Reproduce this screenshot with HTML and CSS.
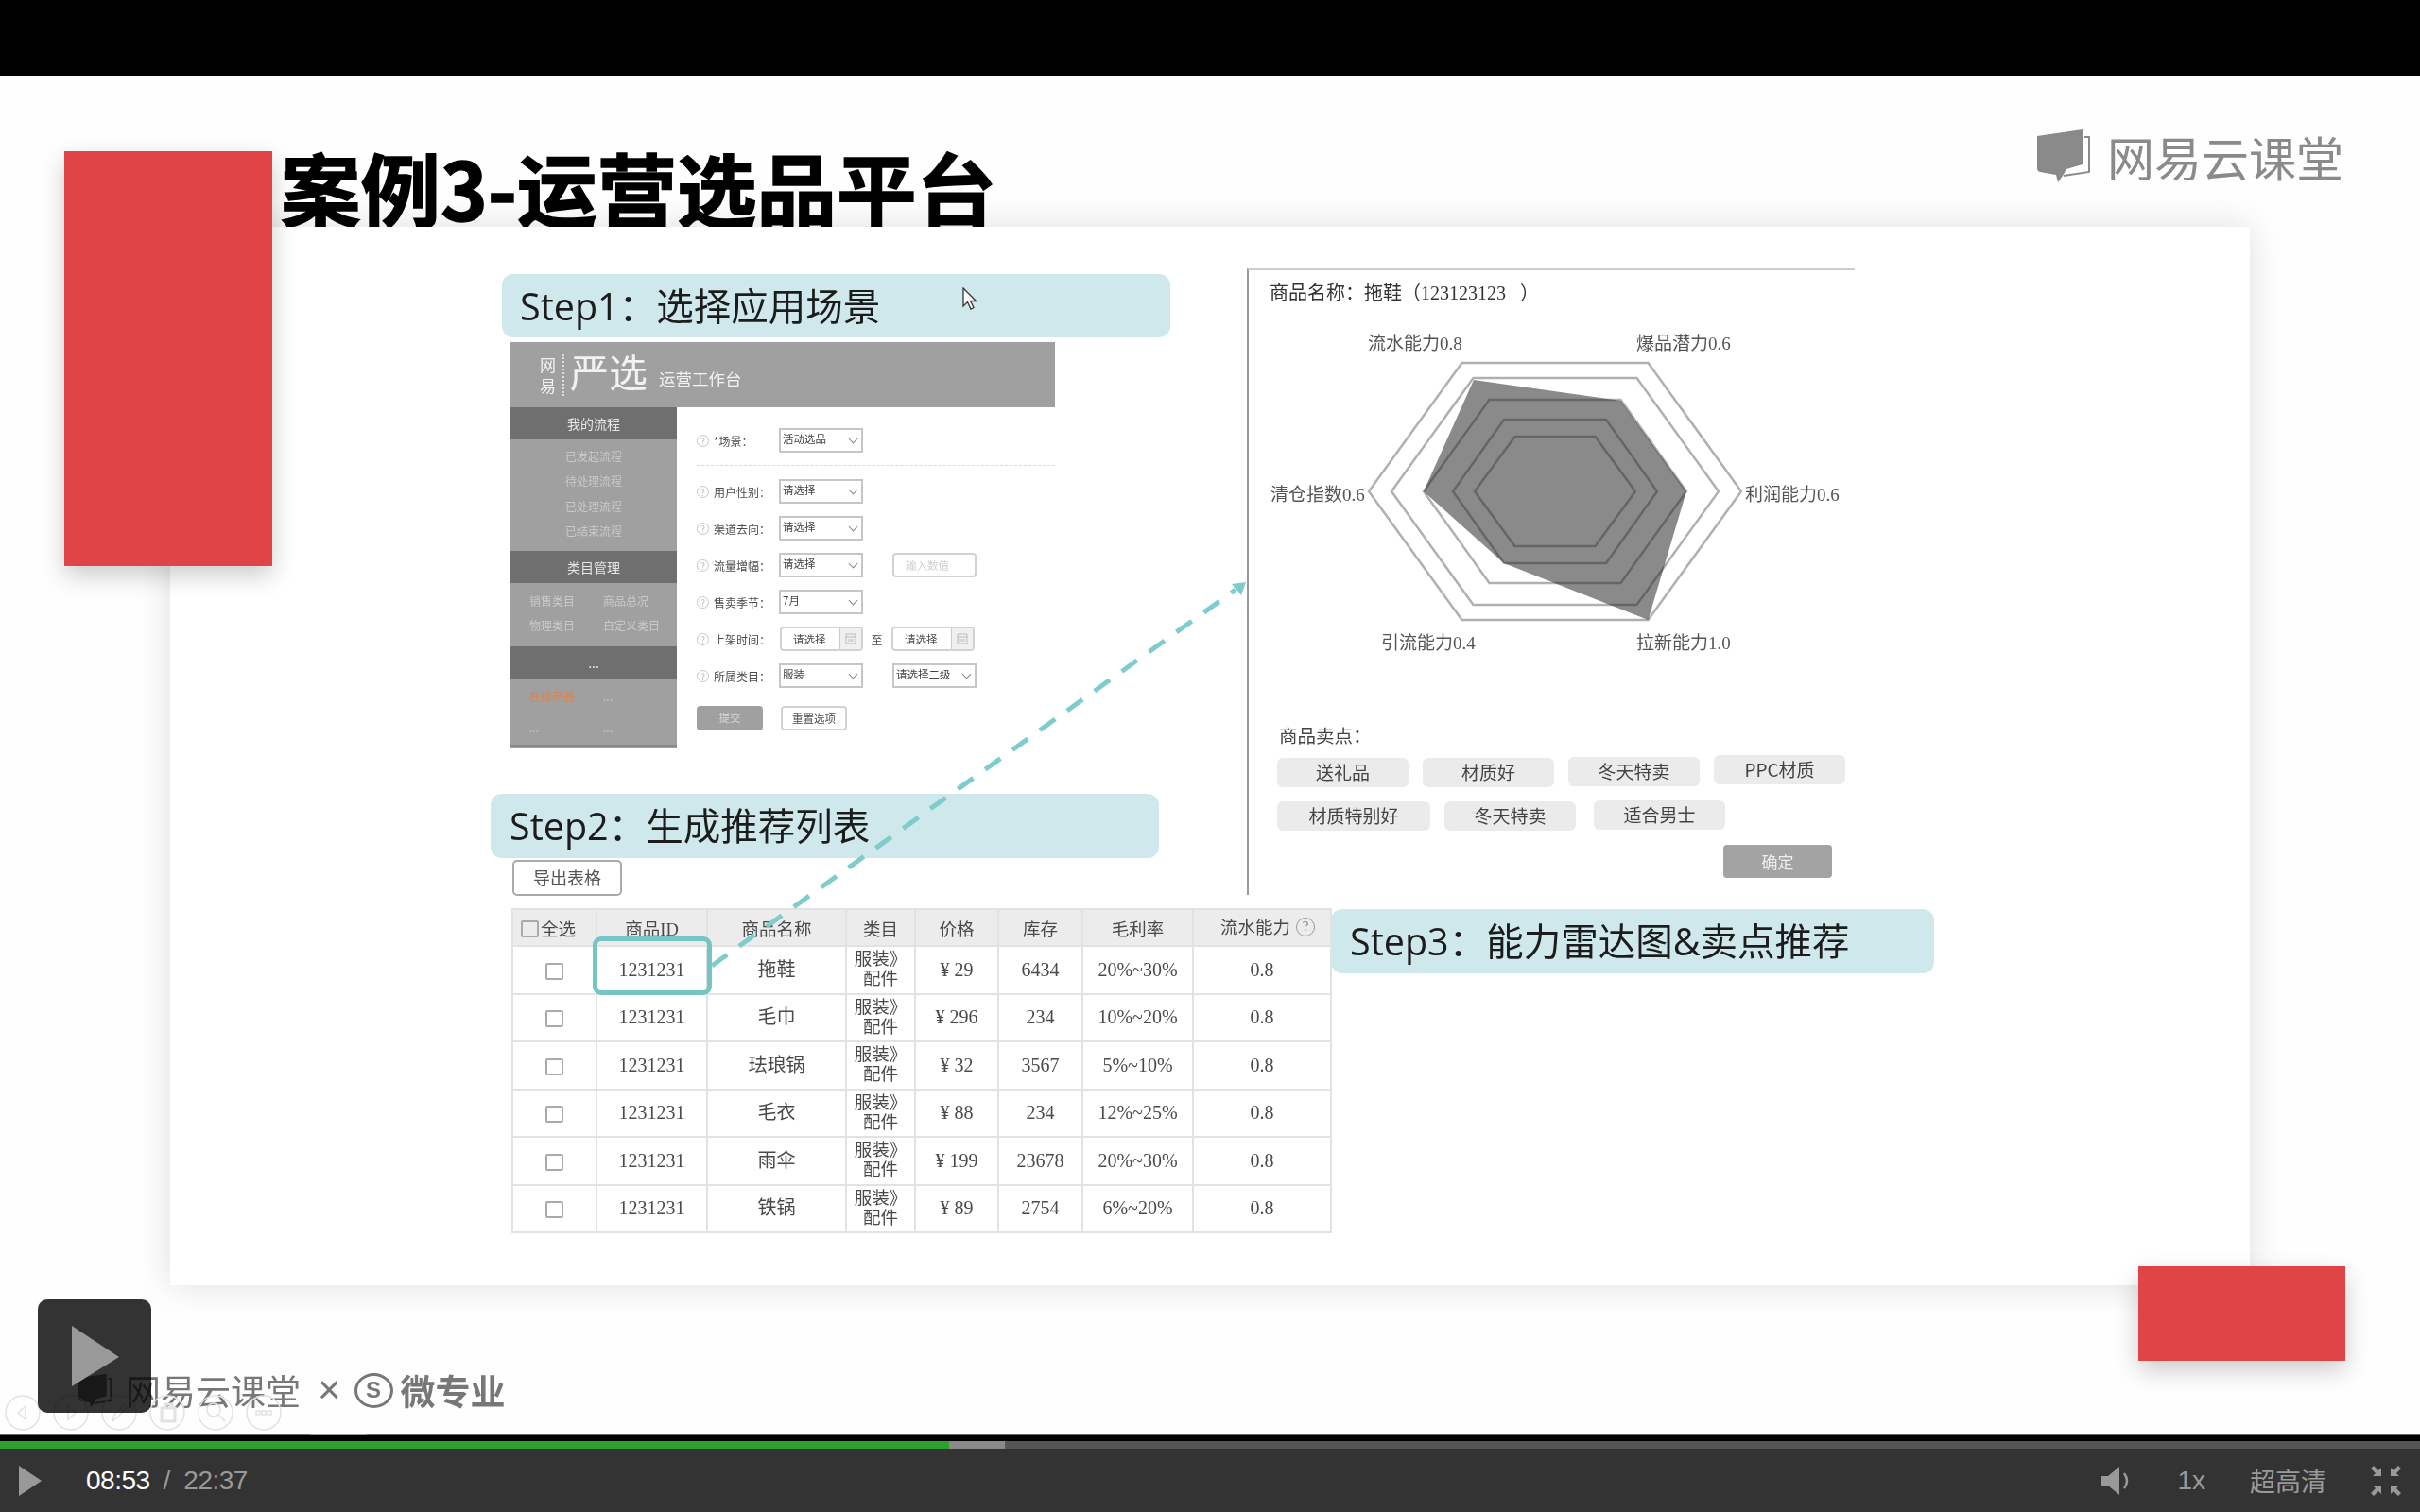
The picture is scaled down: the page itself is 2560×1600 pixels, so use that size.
FILE: index.html
```html
<!DOCTYPE html>
<html lang="zh-CN">
<head>
    <meta charset="UTF-8">
    <title>案例3-运营选品平台</title>
    <link rel="stylesheet" href="styles.css">
</head>
<body>
<div class="player">
    <div class="topbar"></div>

    <!-- Slide: free canvas -->
    <div class="slide">
        <div class="red red-left"></div>
        <h1 class="slide-title">案例3-运营选品平台</h1>
        <div class="logo-top">
            <svg class="book-top" viewBox="0 0 56 58"><path d="M0 8L48 1V38L31 43L27 50L22 57L20 49L3 46Q0 45 0 42Z" fill="#8a8a8a"/><path d="M50 9H55V46L28 50" fill="none" stroke="#8a8a8a" stroke-width="2"/></svg>
            <span>网易云课堂</span>
        </div>

        <div class="card">
            <div class="col-left">
                <div class="step step1">Step1：选择应用场景</div>

                <!-- Mock of the admin page -->
                <div class="mock">
                    <div class="mock-head">
                        <div class="mock-wy">网<br>易</div>
                        <div class="mock-yx">严选</div>
                        <div class="mock-sub">运营工作台</div>
                    </div>
                    <div class="mock-body">
                        <div class="mock-side">
                            <div class="side-title">我的流程</div>
                            <div class="side-list">
                                <div>已发起流程</div>
                                <div>待处理流程</div>
                                <div>已处理流程</div>
                                <div>已结束流程</div>
                            </div>
                            <div class="side-title">类目管理</div>
                            <div class="side-grid">
                                <div>销售类目</div><div>商品总况</div>
                                <div>物理类目</div><div>自定义类目</div>
                            </div>
                            <div class="side-title">...</div>
                            <div class="side-grid side-grid-last">
                                <div class="side-on">在线商品</div><div>...</div>
                                <div>...</div><div>...</div>
                            </div>
                        </div>
                        <div class="mock-form">
                            <div class="row"><i class="q">?</i><label>*场景：</label><div class="sel">活动选品</div></div>
                            <div class="dash dash-first"></div>
                            <div class="rows">
                                <div class="row"><i class="q">?</i><label>用户性别：</label><div class="sel">请选择</div></div>
                                <div class="row"><i class="q">?</i><label>渠道去向：</label><div class="sel">请选择</div></div>
                                <div class="row"><i class="q">?</i><label>流量增幅：</label><div class="sel">请选择</div><div class="inp inp-hint">输入数值</div></div>
                                <div class="row"><i class="q">?</i><label>售卖季节：</label><div class="sel">7月</div></div>
                                <div class="row"><i class="q">?</i><label>上架时间：</label><div class="date">请选择<b><svg viewBox="0 0 12 12"><path d="M1 1H11V11H1ZM1 4H11M4 6V9M6 6V9M8 6V9"/></svg></b></div><span class="to">至</span><div class="date date-to">请选择<b><svg viewBox="0 0 12 12"><path d="M1 1H11V11H1ZM1 4H11M4 6V9M6 6V9M8 6V9"/></svg></b></div></div>
                                <div class="row"><i class="q">?</i><label>所属类目：</label><div class="sel">服装</div><div class="sel sel-second">请选择二级</div></div>
                            </div>
                            <div class="btns">
                                <div class="btn-sub">提交</div>
                                <div class="btn-reset">重置选项</div>
                            </div>
                            <div class="dash dash-last"></div>
                        </div>
                    </div>
                </div>

                <div class="step step2">Step2：生成推荐列表</div>
                <div class="export">导出表格</div>

                <table class="goods">
                    <colgroup>
                        <col class="c1"><col class="c2"><col class="c3"><col class="c4"><col class="c5"><col class="c6"><col class="c7"><col class="c8">
                    </colgroup>
                    <thead>
                        <tr>
                            <th class="all"><span class="check"></span>全选</th>
                            <th>商品ID</th><th>商品名称</th><th>类目</th><th>价格</th><th>库存</th><th>毛利率</th>
                            <th class="th-flow">流水能力<i class="q q-head">?</i></th>
                        </tr>
                    </thead>
                    <tbody>
                        <tr><td><span class="check"></span></td><td>1231231</td><td>拖鞋</td><td class="cat">服装》<br>配件</td><td>¥ 29</td><td>6434</td><td>20%~30%</td><td>0.8</td></tr>
                        <tr><td><span class="check"></span></td><td>1231231</td><td>毛巾</td><td class="cat">服装》<br>配件</td><td>¥ 296</td><td>234</td><td>10%~20%</td><td>0.8</td></tr>
                        <tr><td><span class="check"></span></td><td>1231231</td><td>珐琅锅</td><td class="cat">服装》<br>配件</td><td>¥ 32</td><td>3567</td><td>5%~10%</td><td>0.8</td></tr>
                        <tr><td><span class="check"></span></td><td>1231231</td><td>毛衣</td><td class="cat">服装》<br>配件</td><td>¥ 88</td><td>234</td><td>12%~25%</td><td>0.8</td></tr>
                        <tr><td><span class="check"></span></td><td>1231231</td><td>雨伞</td><td class="cat">服装》<br>配件</td><td>¥ 199</td><td>23678</td><td>20%~30%</td><td>0.8</td></tr>
                        <tr><td><span class="check"></span></td><td>1231231</td><td>铁锅</td><td class="cat">服装》<br>配件</td><td>¥ 89</td><td>2754</td><td>6%~20%</td><td>0.8</td></tr>
                    </tbody>
                </table>
            </div>

            <div class="col-right">
                <div class="panel">
                    <div class="panel-title">商品名称：拖鞋（<span class="num">123123123&nbsp;&nbsp;&nbsp;</span>）</div>
                    <svg class="radar" viewBox="1320 322 642 400">
                        <g fill="none" stroke="#b0b0b0" stroke-width="2.5">
                            <polygon points="1447,521 1545.5,385 1742.5,385 1841,521 1742.5,657 1545.5,657"/>
                            <polygon points="1471,521 1557.5,401 1730.5,401 1817,521 1730.5,641 1557.5,641"/>
                            <polygon points="1505,521 1574.5,424 1713.5,424 1783,521 1713.5,618 1574.5,618"/>
                            <polygon points="1536,521 1590,445 1698,445 1752,521 1698,597 1590,597"/>
                            <polygon points="1559,521 1601.5,463 1686.5,463 1729,521 1686.5,579 1601.5,579"/>
                        </g>
                        <polygon class="radar-data" points="1558,403 1713.5,425 1783,521 1742.5,657 1590,597 1505,521"/>
                        <g class="radar-text">
                            <text x="1446" y="369">流水能力<tspan>0.8</tspan></text>
                            <text x="1730" y="369">爆品潜力<tspan>0.6</tspan></text>
                            <text x="1845" y="529">利润能力<tspan>0.6</tspan></text>
                            <text x="1343" y="529">清仓指数<tspan>0.6</tspan></text>
                            <text x="1460" y="686">引流能力<tspan>0.4</tspan></text>
                            <text x="1730" y="686">拉新能力<tspan>1.0</tspan></text>
                        </g>
                    </svg>
                    <div class="sell-title">商品卖点：</div>
                    <div class="chips">
                        <span class="chip">送礼品</span>
                        <span class="chip">材质好</span>
                        <span class="chip chip-up">冬天特卖</span>
                        <span class="chip chip-up2">PPC材质</span>
                    </div>
                    <div class="chips chips-two">
                        <span class="chip chip-wide">材质特别好</span>
                        <span class="chip">冬天特卖</span>
                        <span class="chip chip-far">适合男士</span>
                    </div>
                    <div class="confirm">确定</div>
                </div>
                <div class="step step3">Step3：能力雷达图&amp;卖点推荐</div>
            </div>

            <!-- Arrow from the selected row to the radar panel -->
            <svg class="arrow" viewBox="0 0 2200 1120">
                <line x1="573" y1="782" x2="1127" y2="384" stroke="#7fcccc" stroke-width="5" stroke-dasharray="20 15.6"/>
                <polygon points="1138,376 1123,378 1133,390" fill="#7fcccc"/>
            </svg>
            <div class="picked"></div>
            <svg class="cursor" viewBox="0 0 16 24"><path d="M1 1V20L5.500 15.500L9 23L12 21.500L8.500 14.500H14.500Z" fill="#fff" stroke="#333" stroke-width="1.300"/></svg>
        </div>

        <div class="red red-right"></div>

        <div class="logo-bottom">
            <svg class="book-bottom" viewBox="0 0 56 58"><path d="M0 8L48 1V38L31 43L27 50L22 57L20 49L3 46Q0 45 0 42Z" fill="#777"/><path d="M50 9H55V46L28 50" fill="none" stroke="#777" stroke-width="2.500"/></svg>
            <span class="lb-name">网易云课堂</span>
            <span class="lb-x">×</span>
            <span class="lb-s">S</span>
            <span class="lb-wzy">微专业</span>
        </div>

        <div class="ghost-tools">
            <svg viewBox="0 0 38 38"><circle cx="19" cy="19" r="18"/><path d="M22 12L14 19L22 26Z"/></svg>
            <svg viewBox="0 0 38 38"><circle cx="19" cy="19" r="18"/><path d="M16 12L24 19L16 26Z"/></svg>
            <svg viewBox="0 0 38 38"><circle cx="19" cy="19" r="18"/><path d="M12 28L14 21L25 10L28 13L17 24Z"/></svg>
            <svg viewBox="0 0 38 38"><circle cx="19" cy="19" r="18"/><path d="M13 14H27V28H13ZM17 10H24V14H17Z" stroke-width="3"/></svg>
            <svg viewBox="0 0 38 38"><circle cx="19" cy="19" r="18"/><circle cx="17" cy="16" r="7"/><path d="M22 21L29 28"/></svg>
            <svg viewBox="0 0 38 38"><circle cx="19" cy="19" r="18"/><path d="M11 17h4v4h-4zM17 17h4v4h-4zM23 17h4v4h-4z"/></svg>
        </div>

        <div class="big-play"><svg viewBox="0 0 50 64"><path d="M0 0L50 33L0 64Z" fill="#999"/></svg></div>
    </div>

    <!-- Seek bar -->
    <div class="seek-line"><span></span></div>
    <div class="seek-gap"></div>
    <div class="seek-track">
        <div class="seek-done"></div>
        <div class="seek-buffer"></div>
    </div>

    <!-- Controls -->
    <div class="controls">
        <svg class="ctl-play" viewBox="0 0 24 32"><path d="M0 0L24 16L0 32Z" fill="#999"/></svg>
        <span class="time-now">08:53</span>
        <span class="time-sep">/</span>
        <span class="time-all">22:37</span>
        <svg class="ctl-vol" viewBox="0 0 32 32"><path d="M0 11H7L19 1V31L7 21H0Z" fill="#999"/><path d="M24 8Q30 16 24 24" fill="none" stroke="#999" stroke-width="2.500"/></svg>
        <span class="ctl-speed">1x</span>
        <span class="ctl-hd">超高清</span>
        <svg class="ctl-full" viewBox="0 0 32 32"><path d="M0 3L3 0L8 5L11 2V11H2L5 8ZM32 3L29 0L24 5L21 2V11H30L27 8ZM0 29L3 32L8 27L11 30V21H2L5 24ZM32 29L29 32L24 27L21 30V21H30L27 24Z" fill="#999"/></svg>
    </div>
</div>
</body>
</html>
```

FILE: styles.css
```css
/* Reset */
body, h1 {
    margin: 0;
    padding: 0;
}

body {
    font-family: "Noto Sans CJK SC", sans-serif;
    background-color: #000;
}

.player {
    width: 2560px;
    height: 1600px;
    display: flex;
    flex-direction: column;
    overflow: hidden;
}

.topbar {
    height: 80px;
    background-color: #000;
}

/* Slide */
.slide {
    position: relative;
    height: 1437px;
    background-color: #fefefe;
    overflow: hidden;
}

.red {
    position: absolute;
    background-color: #e04447;
    box-shadow: 0 10px 24px rgba(0, 0, 0, 0.2);
    z-index: 3;
}

.red-left {
    left: 68px;
    top: 80px;
    width: 220px;
    height: 439px;
}

.red-right {
    left: 2262px;
    top: 1260px;
    width: 219px;
    height: 100px;
}

.slide-title {
    position: absolute;
    left: 297px;
    top: 62px;
    font-size: 84.500px;
    line-height: 110px;
    font-weight: 700;
    color: #000;
    white-space: nowrap;
    -webkit-text-stroke: 1.500px #000;
    filter: blur(0.5px);
}

.logo-top {
    position: absolute;
    left: 2155px;
    top: 56px;
    display: flex;
    align-items: center;
    gap: 18px;
    color: #8a8a8a;
    font-size: 50px;
    line-height: 57px;
    filter: blur(0.4px);
}

.book-top {
    width: 56px;
    height: 58px;
}

/* Card */
.card {
    position: absolute;
    left: 180px;
    top: 160px;
    width: 2200px;
    height: 1120px;
    padding-left: 339px;
    box-sizing: border-box;
    display: flex;
    background-color: #fff;
    box-shadow: 0 0 34px rgba(0, 0, 0, 0.13);
    z-index: 1;
}

.col-left {
    width: 889px;
    flex: none;
    display: flex;
    flex-direction: column;
    align-items: flex-start;
}

.col-right {
    margin-left: -89px;
    display: flex;
    flex-direction: column;
    align-items: flex-start;
}

.step {
    box-sizing: border-box;
    background-color: #cfe8ec;
    border-radius: 12px;
    color: #1c1c1c;
    font-family: "Open Sans", "Noto Sans CJK SC", sans-serif;
    font-size: 39.500px;
    white-space: nowrap;
    display: flex;
    align-items: center;
    padding-bottom: 4px;
    filter: blur(0.4px);
}

.step1 {
    margin: 50px 0 0 12px;
    width: 707px;
    height: 67px;
    padding-left: 19px;
}

.step2 {
    margin-top: 48px;
    width: 707px;
    height: 68px;
    padding-left: 20px;
}

.step3 {
    margin: 15px 0 0 89px;
    width: 638px;
    height: 68px;
    padding-left: 20px;
}

/* Mock page */
.mock {
    margin: 5px 0 0 21px;
    width: 576px;
    height: 430px;
    filter: blur(0.5px);
    overflow: hidden;
}

.mock-head {
    height: 69px;
    background-color: #a0a0a0;
    display: flex;
    align-items: center;
    color: #f2f2f2;
    padding-left: 31px;
}

.mock-wy {
    font-size: 17px;
    line-height: 22px;
    width: 24px;
    border-right: 2px dotted #ddd;
    margin-right: 6px;
}

.mock-yx {
    font-size: 41px;
    line-height: 50px;
    width: 94px;
    margin-top: -9px;
}

.mock-sub {
    font-size: 17.500px;
    margin-top: 8px;
}

.mock-body {
    display: flex;
    height: 361px;
}

.mock-side {
    width: 176px;
    flex: none;
    background-color: #a0a0a0;
    color: #c9c9c9;
    font-size: 12px;
}

.side-title {
    height: 34px;
    line-height: 34px;
    text-align: center;
    background-color: #6f6f6f;
    color: #e6e6e6;
    font-size: 14px;
}

.side-list {
    height: 118px;
    box-sizing: border-box;
    padding-top: 5px;
    text-align: center;
    line-height: 26.300px;
}

.side-grid {
    height: 67px;
    box-sizing: border-box;
    padding: 6px 0 0 20px;
    display: grid;
    grid-template-columns: 78px 1fr;
    align-content: start;
    line-height: 26px;
}

.side-grid-last {
    height: 72px;
    padding-top: 2px;
    line-height: 33px;
    border-bottom: 2px solid #888;
}

.side-on {
    color: #e8803f;
}

.mock-form {
    flex: 1;
    padding: 22px 0 0 21px;
    color: #4c4c4c;
    font-size: 12px;
}

.rows {
    display: flex;
    flex-direction: column;
    gap: 13.100px;
}

.row {
    display: flex;
    align-items: center;
    height: 26px;
}

.row label {
    width: 69px;
    flex: none;
    white-space: nowrap;
}

.q {
    width: 13px;
    height: 13px;
    border: 1px solid #c4c4c4;
    border-radius: 50%;
    box-sizing: border-box;
    margin-right: 5px;
    font-style: normal;
    font-size: 10px;
    line-height: 11px;
    text-align: center;
    color: #bbb;
    flex: none;
}

.sel {
    position: relative;
    width: 89px;
    height: 26px;
    box-sizing: border-box;
    border: 2px solid #c6c6c6;
    padding-left: 2px;
    font-size: 11.500px;
    line-height: 19px;
    color: #444;
}

.sel::after {
    content: "";
    position: absolute;
    right: 5px;
    top: 6px;
    width: 6px;
    height: 6px;
    border-right: 1px solid #888;
    border-bottom: 1px solid #888;
    transform: rotate(45deg);
}

.sel-second {
    margin-left: 31px;
}

.inp {
    margin-left: 31px;
    width: 89px;
    height: 26px;
    box-sizing: border-box;
    border: 2px solid #d2d2d2;
    border-radius: 4px;
    padding-left: 12px;
    line-height: 22px;
    font-size: 11.500px;
    color: #d0d0d0;
}

.date {
    margin-left: 1px;
    width: 88px;
    height: 26px;
    box-sizing: border-box;
    border: 2px solid #d2d2d2;
    border-radius: 4px;
    padding-left: 12px;
    line-height: 22px;
    font-size: 11.500px;
    display: flex;
    justify-content: space-between;
}

.date b {
    width: 22px;
    background-color: #f0f0f0;
    border-left: 1px solid #ccc;
    display: flex;
    align-items: center;
    justify-content: center;
}

.date svg {
    width: 12px;
    height: 12px;
    fill: none;
    stroke: #bbb;
}

.date-to {
    margin-left: 0;
}

.to {
    width: 31px;
    text-align: center;
    margin-left: -1px;
}

.dash {
    border-top: 1px dashed #d8d8d8;
    width: 379px;
}

.dash-first {
    margin: 13px 0 14px;
}

.dash-last {
    margin-top: 17px;
}

.btns {
    display: flex;
    gap: 19px;
    margin-top: 19px;
}

.btn-sub,
.btn-reset {
    width: 70px;
    height: 26px;
    box-sizing: border-box;
    border-radius: 4px;
    line-height: 24px;
    text-align: center;
    font-size: 11.500px;
}

.btn-sub {
    background-color: #a0a0a0;
    color: #d8d8d8;
}

.btn-reset {
    border: 2px solid #d2d2d2;
    line-height: 22px;
}

/* Export button and table */
.export {
    margin: 2px 0 0 23px;
    width: 116px;
    height: 38px;
    box-sizing: border-box;
    border: 2px solid #aaa;
    border-radius: 5px;
    text-align: center;
    line-height: 33px;
    font-size: 18px;
    color: #555;
    background-color: #fff;
    filter: blur(0.3px);
}

.goods {
    margin: 13px 0 0 22px;
    width: 866px;
    height: 343px;
    table-layout: fixed;
    border-collapse: collapse;
    font-size: 18.500px;
    color: #4a4a4a;
    text-align: center;
    font-family: "Liberation Serif", "Noto Sans CJK SC", serif;
    filter: blur(0.35px);
}

.c1 { width: 89px; }
.c2 { width: 117px; }
.c3 { width: 147px; }
.c4 { width: 73px; }
.c5 { width: 88px; }
.c6 { width: 89px; }
.c7 { width: 117px; }
.c8 { width: 146px; }

.goods th,
.goods td {
    border: 2px solid #e2e2e2;
    padding: 0;
}

.goods th {
    height: 37px;
    background-color: #ececec;
    font-weight: 400;
}

.goods td {
    height: 48.500px;
    font-size: 20px;
    line-height: 21px;
}

.goods td.cat {
    font-size: 18.500px;
}

.goods th.all {
    text-align: left;
    padding-left: 8px;
}

.goods th.th-flow {
    padding-left: 12px;
    white-space: nowrap;
}

.check {
    display: inline-block;
    width: 19px;
    height: 18px;
    box-sizing: border-box;
    border: 2px solid #aaa;
    border-radius: 2px;
    vertical-align: middle;
}

.all .check {
    margin: -4px 2px 0 0;
}

.q-head {
    display: inline-block;
    width: 20px;
    height: 20px;
    margin: 0 0 5px 6px;
    font-size: 15px;
    line-height: 17px;
    border-color: #999;
    color: #888;
    vertical-align: middle;
}

/* Radar panel */
.panel {
    margin-top: 44px;
    width: 643px;
    height: 663px;
    box-sizing: border-box;
    border-left: 2px solid #999;
    border-top: 2px solid #ccc;
    display: flex;
    flex-direction: column;
    background-color: #fff;
    filter: blur(0.3px);
}

.panel-title {
    margin: 10px 0 0 22px;
    height: 25px;
    line-height: 26px;
    font-size: 20px;
    color: #333;
    white-space: nowrap;
}

.num,
.radar-text tspan {
    font-family: "Liberation Serif", serif;
}

.radar {
    width: 642px;
    height: 400px;
    flex: none;
}

.radar-data {
    fill: #222;
    fill-opacity: 0.53;
}

.radar-text {
    font-size: 19px;
    fill: #555;
    font-family: "Noto Sans CJK SC", sans-serif;
    transform: translateY(1.500px);
}

.sell-title {
    margin: 44px 0 0 32px;
    height: 26px;
    line-height: 26px;
    font-size: 19.500px;
    color: #444;
}

.chips {
    display: flex;
    gap: 15px;
    margin: 11px 0 0 30px;
    align-items: flex-start;
}

.chips-two {
    margin-top: 15px;
}

.chip {
    width: 139px;
    height: 31px;
    line-height: 30px;
    flex: none;
    text-align: center;
    background-color: #ebebeb;
    border-radius: 6px;
    font-size: 19px;
    color: #444;
}

.chip-up {
    margin-top: -1px;
}

.chip-up2 {
    margin-top: -3px;
}

.chip-wide {
    width: 162px;
}

.chip-far {
    margin-left: 4px;
    margin-top: -1px;
}

.confirm {
    margin: 15px 24px 0 auto;
    width: 115px;
    height: 35px;
    line-height: 35px;
    text-align: center;
    background-color: #a3a3a3;
    border-radius: 4px;
    color: #eee;
    font-size: 17px;
}

/* Things lying over the card */
.arrow {
    position: absolute;
    left: 0;
    top: 0;
    width: 2200px;
    height: 1120px;
    z-index: 1;
    pointer-events: none;
}

.picked {
    position: absolute;
    left: 447px;
    top: 751px;
    width: 126px;
    height: 62px;
    box-sizing: border-box;
    border: 5px solid #76c5c5;
    border-radius: 9px;
    z-index: 1;
}

.cursor {
    position: absolute;
    left: 838px;
    top: 64px;
    width: 16px;
    height: 24px;
    z-index: 3;
}

/* Bottom logo */
.logo-bottom {
    position: absolute;
    left: 80px;
    top: 1372px;
    height: 38px;
    display: flex;
    align-items: center;
    color: #777;
    z-index: 2;
    filter: blur(0.3px);
}

.book-bottom {
    width: 40px;
    height: 37px;
    margin-right: 13px;
}

.lb-name {
    font-size: 37px;
    margin-right: 18px;
}

.lb-x {
    font-family: "Liberation Sans", sans-serif;
    font-size: 42px;
    margin-right: 14px;
}

.lb-s {
    width: 41px;
    height: 37px;
    box-sizing: border-box;
    border: 3px solid #777;
    border-radius: 50%;
    text-align: center;
    font-family: "Liberation Sans", sans-serif;
    font-weight: 700;
    font-size: 24px;
    line-height: 30px;
    margin-right: 8px;
}

.lb-wzy {
    font-size: 37px;
    font-weight: 700;
}

.ghost-tools {
    position: absolute;
    left: 5px;
    top: 1396px;
    display: flex;
    gap: 13px;
    z-index: 2;
}

.ghost-tools svg {
    width: 38px;
    height: 38px;
    fill: none;
    stroke: #e2e2e2;
    stroke-width: 1.500;
}

.big-play {
    position: absolute;
    left: 40px;
    top: 1295px;
    width: 120px;
    height: 120px;
    padding: 28px 0 0 36px;
    box-sizing: border-box;
    border-radius: 10px;
    background-color: rgba(0, 0, 0, 0.8);
    z-index: 4;
}

.big-play svg {
    display: block;
    width: 50px;
    height: 64px;
}

/* Seek bar */
.seek-line {
    height: 2px;
    background-color: #666;
}

.seek-line span {
    display: block;
    margin-left: 328px;
    width: 60px;
    height: 2px;
    background-color: #999;
}

.seek-gap {
    height: 6px;
    background-color: #000;
}

.seek-track {
    height: 8px;
    display: flex;
    background-color: #555;
}

.seek-done {
    width: 1004px;
    background-color: #2fa02f;
}

.seek-buffer {
    width: 59px;
    background-color: #8a8a8a;
}

/* Controls */
.controls {
    height: 67px;
    background-color: #333;
    display: flex;
    align-items: center;
    font-family: "Liberation Sans", sans-serif;
    color: #999;
    font-size: 28px;
}

.ctl-play {
    width: 24px;
    height: 32px;
    margin-left: 20px;
}

.time-now {
    margin-left: 47px;
    color: #fff;
    letter-spacing: -0.500px;
}

.time-sep {
    margin-left: 14px;
}

.time-all {
    margin-left: 14px;
    letter-spacing: -0.500px;
}

.ctl-vol {
    width: 32px;
    height: 32px;
    margin-left: auto;
}

.ctl-speed {
    margin-left: 48px;
}

.ctl-hd {
    margin-left: 47px;
    font-family: "Noto Sans CJK SC", sans-serif;
    font-size: 27px;
}

.ctl-full {
    width: 32px;
    height: 32px;
    margin: 0 20px 0 47px;
}
```
